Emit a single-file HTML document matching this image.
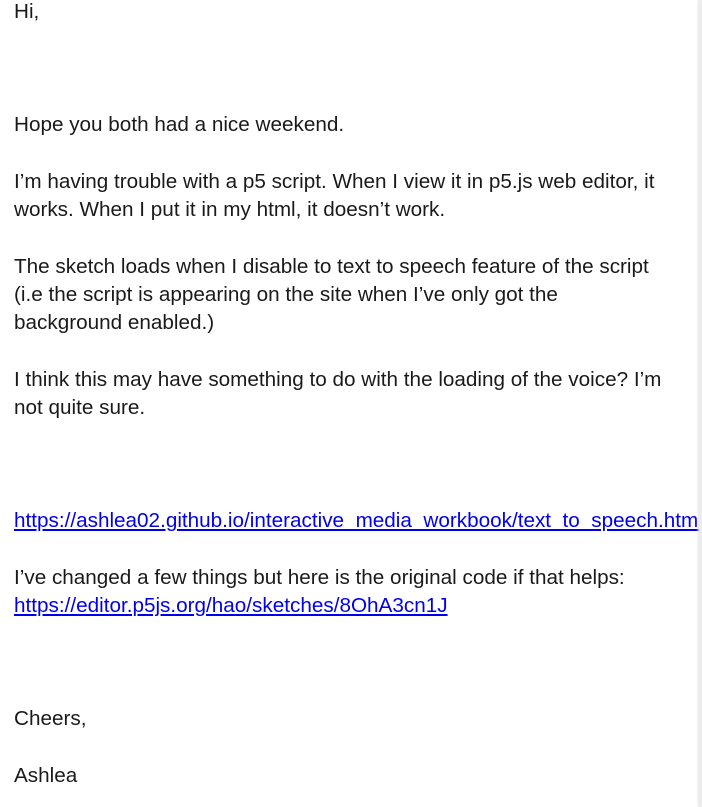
<!DOCTYPE html>
<html><head><meta charset="utf-8"><style>
html,body{margin:0;padding:0;background:#fff;width:702px;height:807px;overflow:hidden;position:relative}
.t{position:absolute;left:14px;top:-2px;width:686px;overflow:hidden;font-family:"Liberation Sans",sans-serif;font-size:20.7px;line-height:28.3px;color:#1a1a1a;white-space:nowrap}
a{color:#0000ee;text-decoration:underline}
.edge{position:absolute;right:0;top:0;width:3px;height:807px;background:#ececec;box-shadow:-1px 0 2px #e4e4e4}
</style></head><body>
<div class="t">Hi,<br><br><br><br>Hope you both had a nice weekend.<br><br>I’m having trouble with a p5 script. When I view it in p5.js web editor, it<br>works. When I put it in my html, it doesn’t work.<br><br>The sketch loads when I disable to text to speech feature of the script<br>(i.e the script is appearing on the site when I’ve only got the<br>background enabled.)<br><br>I think this may have something to do with the loading of the voice? I’m<br>not quite sure.<br><br><br><br><a>https://ashlea02.github.io/interactive_media_workbook/text_to_speech.html</a><br><br>I’ve changed a few things but here is the original code if that helps:<br><a>https://editor.p5js.org/hao/sketches/8OhA3cn1J</a><br><br><br><br>Cheers,<br><br>Ashlea</div>
<div class="edge"></div>
</body></html>
